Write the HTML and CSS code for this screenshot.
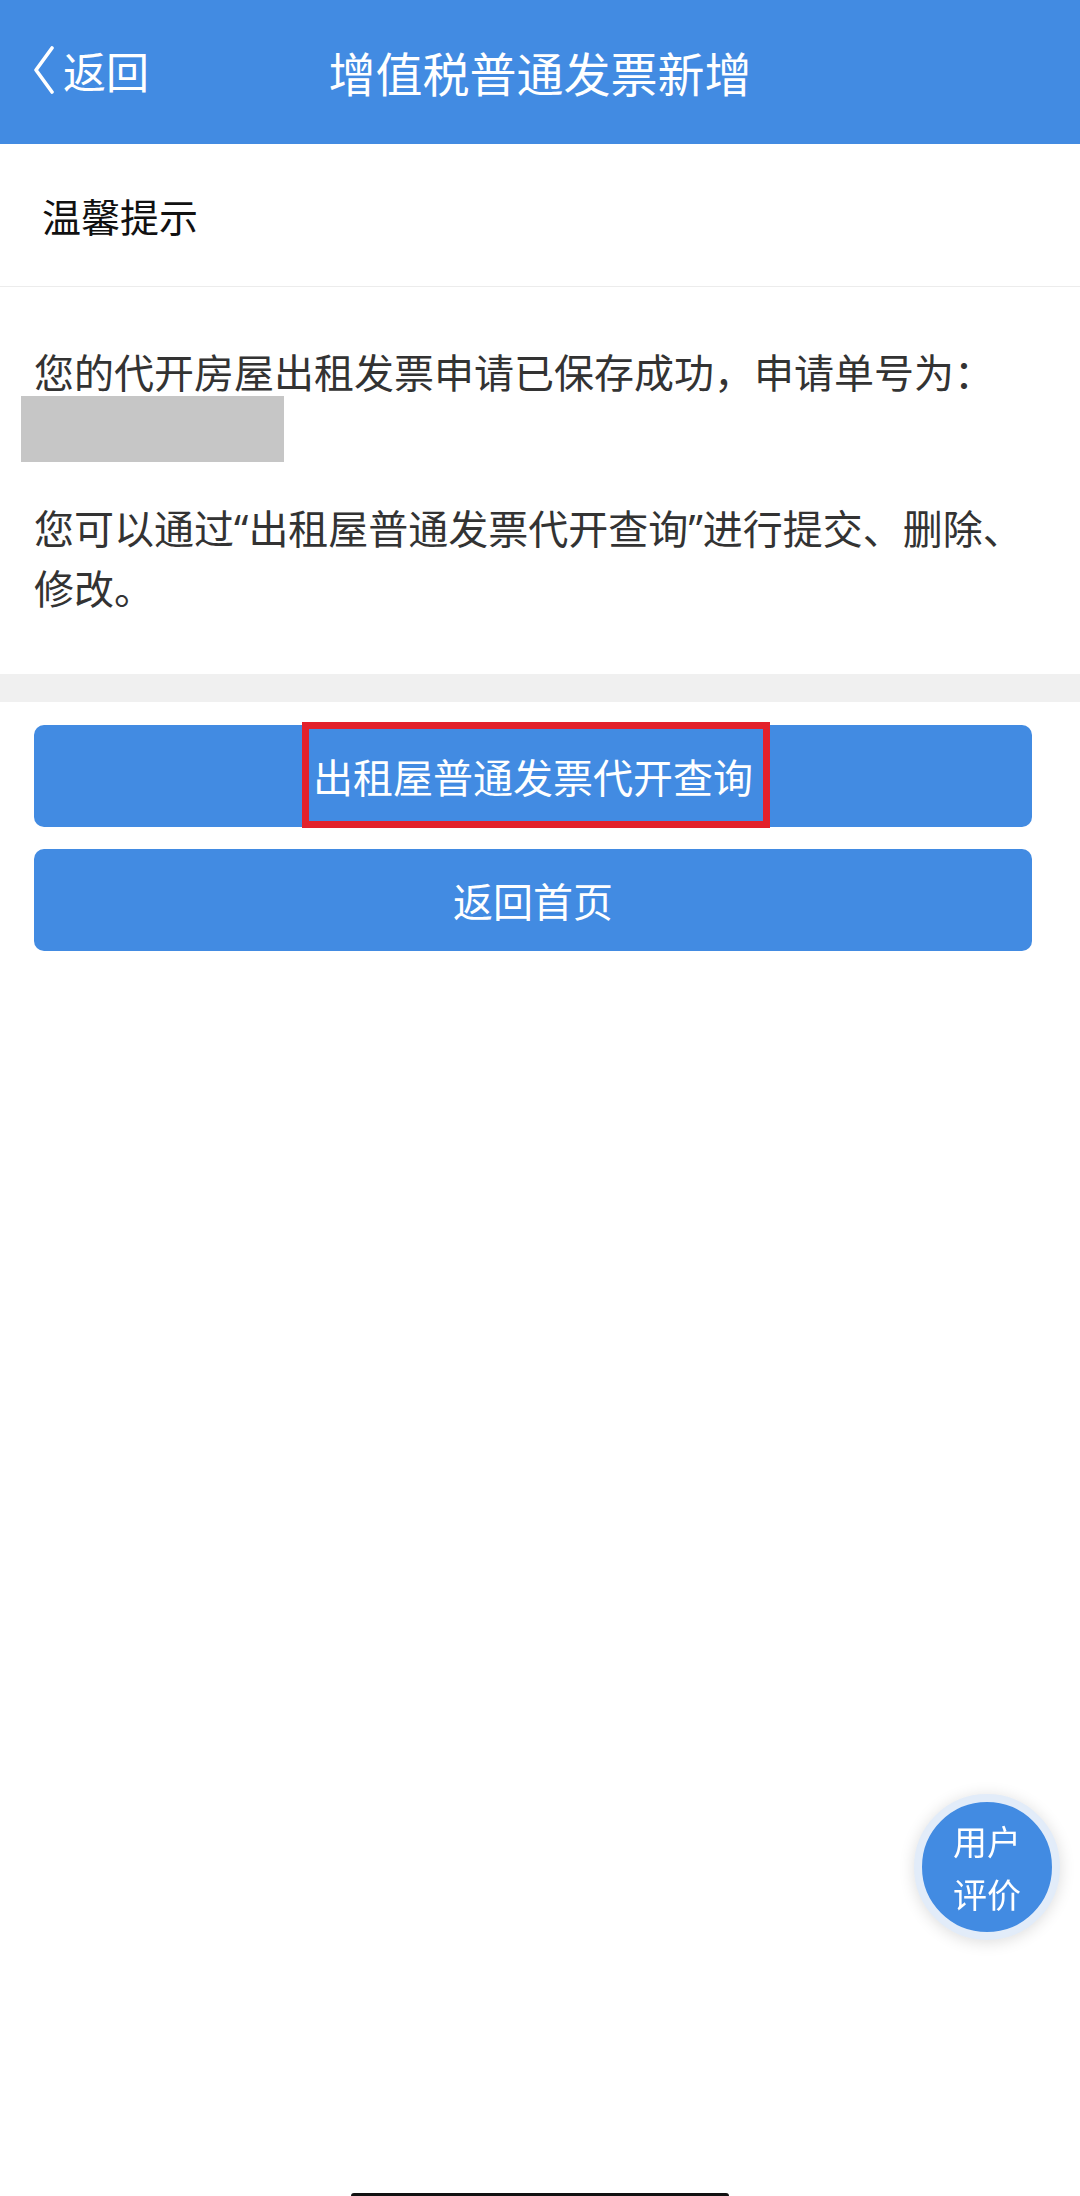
FILE: index.html
```html
<!DOCTYPE html>
<html lang="zh-CN">
<head>
    <meta charset="UTF-8">
    <meta name="viewport" content="width=device-width, initial-scale=1.0">
    <title>增值税普通发票新增</title>
    <link rel="stylesheet" href="styles.css">
</head>
<body>
    <header class="nav-bar">
        <a class="nav-back" href="#">
            <svg class="nav-back-icon" viewBox="0 0 22 48" width="22" height="48">
                <polyline points="19,2 3,24 19,46" fill="none" stroke="#fff" stroke-width="3.6" stroke-linecap="round" stroke-linejoin="round"/>
            </svg>
            <span>返回</span>
        </a>
        <h1 class="nav-title">增值税普通发票新增</h1>
        <div></div>
    </header>

    <div class="tip-title">温馨提示</div>

    <div class="message">
        <p class="msg-line">您的代开房屋出租发票申请已保存成功，申请单号为：</p>
        <div class="masked-no"></div>
        <p class="msg-text">您可以通过<span class="quote">“</span>出租屋普通发票代开查询<span class="quote">”</span>进行提交、删除、修改。</p>
    </div>

    <div class="spacer"></div>

    <div class="actions">
        <button class="btn btn-query" type="button">
            出租屋普通发票代开查询
            <span class="highlight-box"></span>
        </button>
        <button class="btn" type="button">返回首页</button>
    </div>

    <!-- floating feedback entry -->
    <div class="float-rate">用户<br>评价</div>

    <div class="home-indicator"></div>
</body>
</html>
```

FILE: styles.css
```css
body { margin: 0; background-color: #fff; color: #333; font-family: "Noto Sans CJK SC", "Noto Sans", sans-serif; }
a { text-decoration: none; color: inherit; }

.nav-bar {
    height: 144px;
    background-color: #428be2;
    display: grid;
    grid-template-columns: 1fr auto 1fr;
    align-items: center;
    color: #fff;
}
.nav-back { display: flex; align-items: center; padding-left: 33px; font-size: 43px; margin-top: -4px; }
.nav-back-icon { margin-right: 8px; }
.nav-title { margin: 0; font-size: 47px; font-weight: normal; margin-top: -2px; }

.tip-title {
    height: 143px;
    padding-left: 42px;
    display: flex;
    align-items: center;
    font-size: 39px;
    color: #111;
    border-bottom: 1px solid #ececec;
    margin-top: -1px;
}

.message { padding: 55px 34px 58px 34px; font-size: 40px; line-height: 58px; }
.message p { margin: 0; }
.message .quote { font-family: "Noto Sans", sans-serif; }
.masked-no { width: 263px; height: 66px; background-color: #c6c6c6; margin: -4px 0 36px -13px; }

.spacer { height: 28px; background-color: #f0f0f0; }

.actions { display: flex; flex-direction: column; gap: 22px; padding: 23px 48px 0 34px; }
.btn {
    position: relative;
    height: 102px;
    border: none;
    border-radius: 10px;
    background-color: #428be2;
    color: #fff;
    font-family: inherit;
    font-size: 40px;
    cursor: pointer;
}
.highlight-box {
    position: absolute;
    left: 268px;
    top: -3px;
    width: 468px;
    height: 106px;
    box-sizing: border-box;
    border: 7px solid #e3212b;
}

.float-rate {
    position: fixed;
    left: 914px;
    top: 1794px;
    width: 130px;
    height: 130px;
    border: 8px solid #e2ecf9;
    border-radius: 50%;
    background-color: #428be2;
    color: #fff;
    font-size: 34px;
    line-height: 53px;
    text-align: center;
    display: flex;
    align-items: center;
    justify-content: center;
    box-shadow: 0 2px 16px rgba(0,0,0,0.14);
}

.home-indicator {
    position: fixed;
    left: 351px;
    bottom: 0;
    width: 378px;
    height: 3px;
    background-color: #111;
    border-radius: 3px 3px 0 0;
}
```
